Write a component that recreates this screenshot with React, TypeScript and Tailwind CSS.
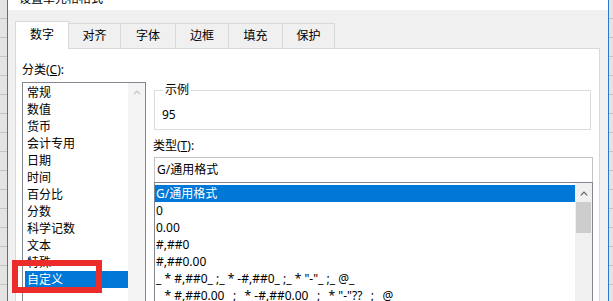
import React from 'react';

const CATEGORIES = ['常规', '数值', '货币', '会计专用', '日期', '时间', '百分比', '分数', '科学记数', '文本', '特殊', '自定义'];
const TYPES = [
  'G/通用格式',
  '0',
  '0.00',
  '#,##0',
  '#,##0.00',
  '_ * #,##0_ ;_ * -#,##0_ ;_ * "-"_ ;_ @_ ',
  '_ * #,##0.00_ ;_ * -#,##0.00_ ;_ * "-"??_ ;_ @_ ',
];
const TABS = [
  { label: '数字', w: 'w-[54px]' },
  { label: '对齐', w: 'w-[52px]' },
  { label: '字体', w: 'w-[55px]' },
  { label: '边框', w: 'w-[53px]' },
  { label: '填充', w: 'w-[54px]' },
  { label: '保护', w: 'w-[52px]' },
];

function ChevronUp({ color }: { color: string }) {
  return (
    <svg width="8" height="5" viewBox="0 0 8 5">
      <path d="M0.8 4.3 L4 1.1 L7.2 4.3" fill="none" stroke={color} strokeWidth="1.2" />
    </svg>
  );
}

const GRID = 'bg-[repeating-linear-gradient(to_bottom,#e3e3e3_0,#e3e3e3_18px,#c4c4c4_18px,#c4c4c4_19px)]';

export default function App() {
  return (
    <div className="relative w-[613px] h-[301px] overflow-hidden flex bg-[#f0f0f0] text-black font-['Segoe_UI','Noto_Sans','Noto_Sans_CJK_SC',sans-serif] text-[12px]">
      <div className={`w-[7px] shrink-0 ${GRID}`} />
      <div className="w-px shrink-0 bg-[#2b79d0]" />

      {/* dialog */}
      <div className="w-[600px] shrink-0 flex flex-col bg-[#f0f0f0]">
        <div className="h-[10px] shrink-0 bg-white overflow-hidden">
          <div className="-mt-[9px] pl-[11px] leading-[16px] text-[12px]">设置单元格格式</div>
        </div>

        <div className="shrink-0 pl-[7px] pr-[8px] pt-[11px]">
          {/* tabs */}
          <div className="flex items-end h-[27px]">
            {TABS.map((t, i) =>
              i === 0 ? (
                <div key={t.label} className={`${t.w} h-[28px] -mb-px relative z-10 bg-white border border-b-0 border-[#d9d9d9] flex items-center justify-center pb-[2px]`}>
                  {t.label}
                </div>
              ) : (
                <div key={t.label} className={`${t.w} h-[25px] bg-[#f0f0f0] border border-l-0 border-b-0 border-[#d9d9d9] flex items-center justify-center`}>
                  {t.label}
                </div>
              )
            )}
          </div>

          {/* panel */}
          <div className="h-[260px] bg-white border border-[#d9d9d9] pl-[6px] pt-[13px]">
            <div className="leading-[16px]">分类(<span className="underline">C</span>):</div>
            <div className="flex mt-[4px]">
              {/* category list */}
              <div className="w-[124px] h-[230px] border border-[#828790] flex">
                <div className="flex-1 pt-px">
                  {CATEGORIES.map(c => (
                    <div
                      key={c}
                      className={
                        c === '自定义'
                          ? 'ml-[2px] h-[17px] leading-[17px] pl-[2px] bg-[#0078d7] text-white'
                          : 'ml-[2px] h-[17px] leading-[17px] pl-[2px]'
                      }
                    >
                      {c}
                    </div>
                  ))}
                </div>
                <div className="w-[17px] bg-[#f4f4f4] flex justify-center pt-[7px]">
                  <ChevronUp color="#c2c2c2" />
                </div>
              </div>

              {/* right column */}
              <div className="w-[439px] ml-[8px]">
                <fieldset className="border border-[#dcdcdc] mr-[2px] pl-[7px] pt-[9px] pb-[6px]">
                  <legend className="px-[2px] ml-[1px] leading-[16px]">示例</legend>
                  <div className="leading-[16px]">95</div>
                </fieldset>
                <div className="mt-[8px] -ml-px leading-[16px]">类型(<span className="underline">T</span>):</div>
                <div className="mt-[3px] h-[25px] border border-b-0 border-[#c4c4c4] pl-[2px] flex items-center">G/通用格式</div>
                <div className="h-[130px] border border-[#828790] flex">
                  <div className="flex-1 pt-[2px]">
                    {TYPES.map((t, i) => (
                      <div
                        key={t}
                        className={
                          i === 0
                            ? 'h-[17px] leading-[17px] pl-[1px] whitespace-pre bg-[#0078d7] text-white'
                            : 'h-[17px] leading-[17px] pl-[1px] whitespace-pre'
                        }
                      >
                        {t}
                      </div>
                    ))}
                  </div>
                  <div className="w-[17px] bg-[#f0f0f0] flex flex-col items-center pt-[8px]">
                    <ChevronUp color="#606060" />
                    <div className="mt-[6px] w-[15px] h-[31px] bg-[#cdcdcd]" />
                  </div>
                </div>
              </div>
            </div>
          </div>
        </div>
      </div>

      <div className="w-px shrink-0 bg-[#2b79d0]" />
      <div className={`flex-1 ${GRID}`} />

      {/* red highlight */}
      <div className="absolute left-[12px] top-[260px] w-[90px] h-[33px] border-[6px] border-[#ec2b2b]" />
    </div>
  );
}
